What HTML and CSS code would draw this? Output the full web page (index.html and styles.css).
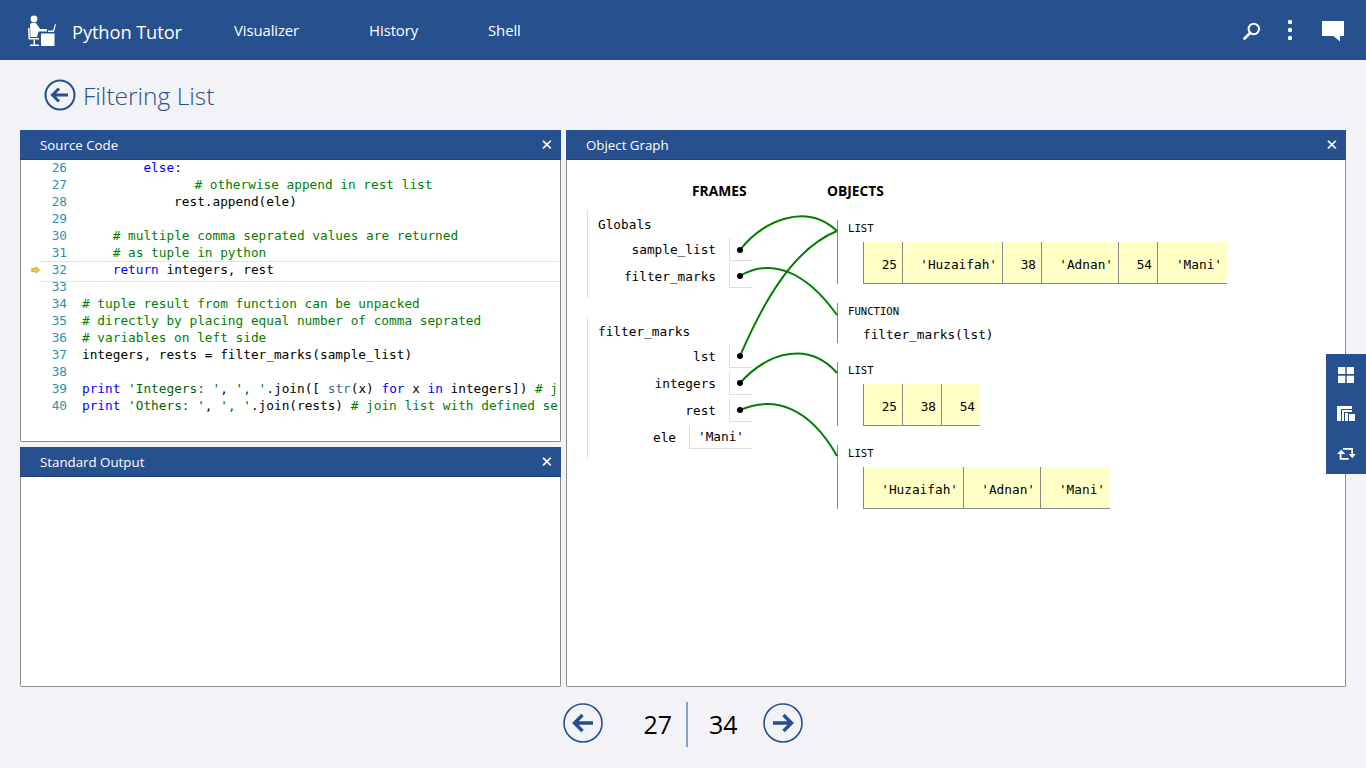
FILE: index.html
```html
<!DOCTYPE html>
<html lang="en">
<head>
<meta charset="utf-8">
<title>Python Tutor - Filtering List</title>
<link rel="stylesheet" href="styles.css">
</head>
<body>
<header class="topbar">
  <div class="brand">
    <svg class="logo" width="30" height="32" viewBox="0 0 30 32">
      <circle cx="7" cy="4" r="3.4" fill="#fff"/>
      <path d="M3 9.5 Q3 8 5 8 L9 8 L13 14 L20 14 L20 16.5 L11.5 16.5 L10 22 L3.5 22 Z" fill="#fff"/>
      <path d="M1 13 L2.5 13 L3 23 L12 23 L12 24.5 L1.5 24.5 Z" fill="#fff"/>
      <path d="M6.5 24.5 L8 24.5 L8 29.5 L12 29.5 L12 31 L3 31 L3 29.5 L6.5 29.5 Z" fill="#fff"/>
      <rect x="14" y="18.5" width="13.5" height="12.5" fill="#fff"/>
      <path d="M21 15.5 L26 15.5 L28 9 L29 9.5 L27 17 L21 17 Z" fill="#fff"/>
    </svg>
    <span class="brand-name">Python Tutor</span>
  </div>
  <nav class="topnav">
    <a class="topnav-item">Visualizer</a>
    <a class="topnav-item">History</a>
    <a class="topnav-item">Shell</a>
  </nav>
  <div class="top-actions">
    <svg class="ico-search" width="20" height="20" viewBox="0 0 20 20" fill="none" stroke="#fff">
      <circle cx="11.8" cy="8" r="5.2" stroke-width="2"/>
      <path d="M8 12 L2.5 17.5" stroke-width="2.8" stroke-linecap="round"/>
    </svg>
    <svg class="ico-dots" width="6" height="22" viewBox="0 0 6 22" fill="#fff">
      <circle cx="3" cy="3" r="2.2"/><circle cx="3" cy="11" r="2.2"/><circle cx="3" cy="19" r="2.2"/>
    </svg>
    <svg class="ico-chat" width="22" height="21" viewBox="0 0 22 21" fill="#fff">
      <path d="M0 0 H22 V15 H18 V20.5 L11.5 15 H0 Z"/>
    </svg>
  </div>
</header>

<div class="titlebar">
  <svg width="32" height="32" viewBox="0 0 32 32" fill="none" stroke="#27508e">
    <circle cx="16" cy="16" r="14.5" stroke-width="2"/>
    <path d="M24 16 H9 M15 9.5 L8.5 16 L15 22.5" stroke-width="3"/>
  </svg>
  <h1 class="page-title">Filtering List</h1>
</div>

<main class="workspace">
  <div class="left-col">
    <section class="panel panel-source">
      <div class="panel-head"><span>Source Code</span><span class="close">✕</span></div>
      <div class="code">
        <div class="ln"><span class="gut"></span><span class="num">26</span><span class="src">        <b>else</b>:</span></div>
        <div class="ln"><span class="gut"></span><span class="num">27</span><span class="src">              <i class="nudge"># otherwise append in rest list</i></span></div>
        <div class="ln"><span class="gut"></span><span class="num">28</span><span class="src">            rest.append(ele)</span></div>
        <div class="ln"><span class="gut"></span><span class="num">29</span><span class="src"></span></div>
        <div class="ln"><span class="gut"></span><span class="num">30</span><span class="src">    <i># multiple comma seprated values are returned</i></span></div>
        <div class="ln"><span class="gut"></span><span class="num">31</span><span class="src">    <i># as tuple in python</i></span></div>
        <div class="ln ln-cur"><span class="gut"><svg width="14" height="10" viewBox="0 0 14 10"><path d="M1 2.5 H7 V0.5 L12.5 5 L7 9.5 V7.5 H1 Z" fill="#f5c431" stroke="#a98a2a" stroke-width=".7"/></svg></span><span class="num">32</span><span class="src">    <b>return</b> integers, rest</span></div>
        <div class="ln"><span class="gut"></span><span class="num">33</span><span class="src"></span></div>
        <div class="ln"><span class="gut"></span><span class="num">34</span><span class="src"><i># tuple result from function can be unpacked</i></span></div>
        <div class="ln"><span class="gut"></span><span class="num">35</span><span class="src"><i># directly by placing equal number of comma seprated</i></span></div>
        <div class="ln"><span class="gut"></span><span class="num">36</span><span class="src"><i># variables on left side</i></span></div>
        <div class="ln"><span class="gut"></span><span class="num">37</span><span class="src">integers, rests = filter_marks(sample_list)</span></div>
        <div class="ln"><span class="gut"></span><span class="num">38</span><span class="src"></span></div>
        <div class="ln"><span class="gut"></span><span class="num">39</span><span class="src"><b>print</b> <u>'Integers: '</u>, <u>', '</u>.join([ <em>str</em>(x) <b>for</b> x <b>in</b> integers]) <i># j</i></span></div>
        <div class="ln"><span class="gut"></span><span class="num">40</span><span class="src"><b>print</b> <u>'Others: '</u>, <u>', '</u>.join(rests) <i># join list with defined se</i></span></div>
      </div>
    </section>
    <section class="panel panel-output">
      <div class="panel-head"><span>Standard Output</span><span class="close">✕</span></div>
    </section>
  </div>

  <section class="panel panel-graph">
    <div class="panel-head"><span>Object Graph</span><span class="close">✕</span></div>
    <div class="canvas">
      <div class="col-title col-frames">FRAMES</div>
      <div class="col-title col-objects">OBJECTS</div>

      <div class="frame frame-globals">
        <div class="frame-name">Globals</div>
        <div class="var"><span class="var-name">sample_list</span><span class="var-val ptr"></span></div>
        <div class="var"><span class="var-name">filter_marks</span><span class="var-val ptr"></span></div>
      </div>
      <div class="frame frame-local">
        <div class="frame-name">filter_marks</div>
        <div class="var"><span class="var-name">lst</span><span class="var-val ptr"></span></div>
        <div class="var"><span class="var-name">integers</span><span class="var-val ptr"></span></div>
        <div class="var"><span class="var-name">rest</span><span class="var-val ptr"></span></div>
        <div class="var"><span class="var-name">ele</span><span class="var-val str">'Mani'</span></div>
      </div>

      <div class="obj obj-a">
        <div class="obj-type">LIST</div>
        <div class="arr">
          <span class="w39">25</span><span class="w100">'Huzaifah'</span><span class="w39">38</span><span class="w77">'Adnan'</span><span class="w39">54</span><span class="w70">'Mani'</span>
        </div>
      </div>
      <div class="obj obj-b">
        <div class="obj-type">FUNCTION</div>
        <div class="fn">filter_marks(lst)</div>
      </div>
      <div class="obj obj-c">
        <div class="obj-type">LIST</div>
        <div class="arr">
          <span class="w39">25</span><span class="w39">38</span><span class="w39">54</span>
        </div>
      </div>
      <div class="obj obj-d">
        <div class="obj-type">LIST</div>
        <div class="arr">
          <span class="w100">'Huzaifah'</span><span class="w77">'Adnan'</span><span class="w70">'Mani'</span>
        </div>
      </div>

      <svg class="arrows" width="780" height="526" viewBox="566 160 780 526" fill="none" stroke="#008000" stroke-width="2">
        <path d="M740 250 C762 222 805 201 837 231"/>
        <path d="M740 276 C770 258 805 270 837 315"/>
        <path d="M740 356 C760 310 790 250 837 231"/>
        <path d="M740 383 C770 350 810 342 837 373"/>
        <path d="M740 410 C775 395 810 408 837 456"/>
        <g fill="#000" stroke="none">
          <circle cx="740" cy="250" r="3"/><circle cx="740" cy="276" r="3"/><circle cx="740" cy="356" r="3"/><circle cx="740" cy="383" r="3"/><circle cx="740" cy="410" r="3"/>
        </g>
      </svg>
    </div>
  </section>
</main>

<aside class="flyout">
  <svg width="16" height="16" viewBox="0 0 16 16" fill="#fff"><rect width="7.3" height="7"/><rect x="8.7" width="7.3" height="7"/><rect y="8.7" width="7.3" height="7.3"/><rect x="8.7" y="8.7" width="7.3" height="7.3"/></svg>
  <svg width="18" height="15" viewBox="0 0 18 15" fill="#fff"><path d="M0 0 H15 V3 H4 V15 H0 Z"/><path d="M5 4 H15 V6 H7 V15 H5 Z"/><rect x="12" y="8" width="6" height="7"/><rect x="8" y="7" width="3" height="8"/></svg>
  <svg width="19" height="16" viewBox="0 -3 19 16" fill="#fff"><path d="M6 0 H16 V6 H18.7 L15.2 10.3 L11.7 6 H14.3 V1.7 H6 Z"/><path d="M4.3 1.7 L8.3 6 H4.5 V10 H11.7 V11.7 H2.7 V6 H0 Z"/></svg>
</aside>

<footer class="pager">
  <svg width="40" height="40" viewBox="0 0 40 40" fill="none" stroke="#27508e">
    <circle cx="20" cy="20" r="19" stroke-width="1.6"/>
    <path d="M30 20 H12 M19.5 12 L11.5 20 L19.5 28" stroke-width="3.4"/>
  </svg>
  <div class="pager-count">
    <span class="cur">27</span><span class="total">34</span>
  </div>
  <svg width="40" height="40" viewBox="0 0 40 40" fill="none" stroke="#27508e">
    <circle cx="20" cy="20" r="19" stroke-width="1.6"/>
    <path d="M10 20 H28 M20.5 12 L28.5 20 L20.5 28" stroke-width="3.4"/>
  </svg>
</footer>
</body>
</html>
```

FILE: styles.css
```css
* { box-sizing: border-box; }
html, body { margin: 0; height: 768px; overflow: hidden; }
body {
  background: #f2f2f7;
  font-family: "Open Sans", "Noto Sans", sans-serif;
  color: #000;
  display: flex;
  flex-direction: column;
}

.topbar {
  height: 60px;
  background: #27508e;
  color: #fff;
  display: flex;
  align-items: center;
  flex: none;
}
.brand { display: flex; align-items: center; padding-left: 27px; width: 234px; }
.logo { margin-top: 2px; }
.brand-name { margin-left: 15px; font-size: 18.3px; letter-spacing: -.1px; margin-top: 3px; }
.topnav { display: flex; gap: 70px; margin-top: -1px; }
.topnav-item { font-size: 14.9px; letter-spacing: -.1px; }
.top-actions { margin-left: auto; display: flex; align-items: center; padding-right: 22px; }
.ico-search { margin-right: 25px; margin-top: 2px; }
.ico-dots { margin-right: 29px; }
.ico-chat { margin-top: 3px; }

.titlebar {
  height: 70px;
  flex: none;
  display: flex;
  align-items: center;
  padding-left: 44px;
  gap: 7px;
}
.page-title {
  margin: 0;
  font-size: 24.5px;
  font-weight: 300;
  color: #27508e;
}

.workspace {
  height: 557px;
  flex: none;
  display: flex;
  gap: 5px;
  padding: 0 20px;
}
.left-col { width: 541px; display: flex; flex-direction: column; gap: 5px; flex: none; }
.panel {
  background: #fff;
  border: 1px solid #8c8c8c;
  border-top: 0;
  border-radius: 0 0 2px 2px;
  display: flex;
  flex-direction: column;
}
.panel-source { height: 312px; flex: none; }
.panel-output { flex: 1; }
.panel-graph { flex: 1; position: relative; }
.panel-head {
  height: 30px;
  margin: 0 -1px;
  background: #27508e;
  border-bottom: 1px solid #1f4272;
  color: #fff;
  font-size: 13.3px;
  display: flex;
  align-items: center;
  justify-content: space-between;
  padding: 0 8px 0 20px;
  flex: none;
}
.close { font-size: 15px; font-weight: 700; font-family: "DejaVu Sans", sans-serif; }

.code {
  font-family: "DejaVu Sans Mono", monospace;
  font-size: 12.75px;
  line-height: 17px;
  overflow: hidden;
  flex: 1;
  margin: -1px 1px 0 0;
}
.ln { display: flex; height: 17px; }
.gut { width: 20px; padding-left: 10px; flex: none; display: flex; align-items: center; }
.num { width: 26px; flex: none; text-align: right; color: #2b91af; }
.src { padding-left: 15px; white-space: pre; }
.ln-cur { position: relative; }
.ln-cur::before {
  content: "";
  position: absolute;
  left: 19px;
  right: 0;
  top: 0;
  height: 19px;
  border-top: 1px solid #fbeb6a;
  border-bottom: 1px solid #fbeb6a;
}
.code b { font-weight: 400; color: #0000ff; }
.code i { font-style: normal; color: #008000; }
.code .nudge { margin-left: 5px; }
.code u { text-decoration: none; color: #006400; }
.code em { font-style: normal; color: #3a6a94; }

.canvas {
  position: relative;
  flex: 1;
  font-family: "DejaVu Sans Mono", monospace;
  font-size: 12.75px;
}
.arrows { position: absolute; left: -1px; top: 0; pointer-events: none; }
.col-title {
  position: absolute;
  top: 22px;
  font-family: "Open Sans", sans-serif;
  font-weight: 700;
  font-size: 13.8px;
  line-height: 18px;
}
.col-frames { left: 125px; }
.col-objects { left: 260px; }

.frame {
  position: absolute;
  left: 20px;
  width: 165px;
  border-left: 1px solid #ddd;
  padding-top: 7px;
}
.frame-globals { top: 50px; height: 88px; }
.frame-local { top: 157px; height: 142px; }
.frame-name { padding-left: 10px; height: 16px; line-height: 16px; margin-bottom: 5px; }
.var { display: flex; justify-content: flex-end; align-items: center; height: 23px; margin-bottom: 4px; }
.var-name { flex: 1; text-align: right; padding-right: 13px; }
.var-val {
  height: 23px;
  line-height: 22px;
  border-left: 1px solid #ddd;
  border-bottom: 1px solid #ddd;
  width: 23px;
  flex: none;
}
.var-val.str { width: 63px; text-align: center; }

.obj {
  position: absolute;
  left: 270px;
  border-left: 1px solid #888;
  padding-left: 10px;
}
.obj-a { top: 60px; height: 64px; }
.obj-b { top: 143px; height: 40px; }
.obj-c { top: 202px; height: 64px; }
.obj-d { top: 285px; height: 64px; }
.obj-type { font-size: 10.6px; height: 22px; line-height: 16px; }
.fn { padding-left: 15px; line-height: 18px; margin-top: 1px; }
.arr { display: flex; margin-left: 15px; height: 42px; background: #ffffc6; border-bottom: 1px solid #888; }
.arr span {
  border-left: 1px solid #888;
  text-align: right;
  padding: 15px 5px 0 0;
  line-height: 16px;
  flex: none;
}
.w39 { width: 39px; }
.w70 { width: 70px; }
.w77 { width: 77px; }
.w100 { width: 100px; }

.flyout {
  position: absolute;
  right: 0;
  top: 354px;
  width: 40px;
  height: 120px;
  background: #27508e;
  display: flex;
  flex-direction: column;
  align-items: center;
  justify-content: space-around;
  padding: 1px 0;
}

.pager {
  flex: 1;
  display: flex;
  align-items: center;
  justify-content: center;
  padding-bottom: 9px;
}
.pager-count { display: flex; align-items: center; height: 45px; font-size: 25px; margin-top: 3px; }
.cur { width: 85px; padding-right: 14px; text-align: right; border-right: 2px solid #8aa0c4; height: 45px; line-height: 45px; }
.total { width: 75px; padding-left: 21px; text-align: left; line-height: 45px; }
```
